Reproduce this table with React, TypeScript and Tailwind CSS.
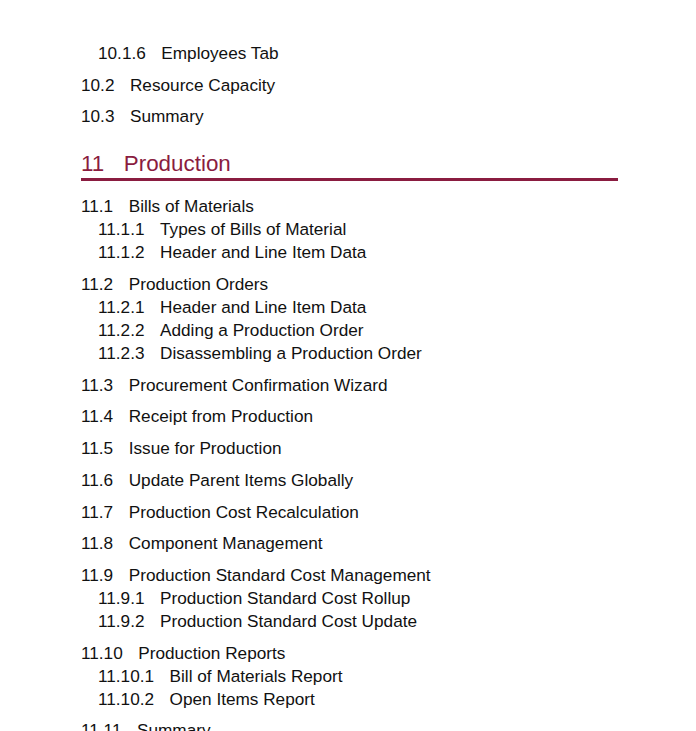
const font = { fontFamily: '"Liberation Sans", Arial, sans-serif' };

type Entry = { num: string; title: string; level: 2 | 3 };

// each inner array is a group: a section and its subsections
const before: Entry[][] = [
  [{ num: "10.1.6", title: "Employees Tab", level: 3 }],
  [{ num: "10.2", title: "Resource Capacity", level: 2 }],
  [{ num: "10.3", title: "Summary", level: 2 }],
];

const production: Entry[][] = [
  [
    { num: "11.1", title: "Bills of Materials", level: 2 },
    { num: "11.1.1", title: "Types of Bills of Material", level: 3 },
    { num: "11.1.2", title: "Header and Line Item Data", level: 3 },
  ],
  [
    { num: "11.2", title: "Production Orders", level: 2 },
    { num: "11.2.1", title: "Header and Line Item Data", level: 3 },
    { num: "11.2.2", title: "Adding a Production Order", level: 3 },
    { num: "11.2.3", title: "Disassembling a Production Order", level: 3 },
  ],
  [{ num: "11.3", title: "Procurement Confirmation Wizard", level: 2 }],
  [{ num: "11.4", title: "Receipt from Production", level: 2 }],
  [{ num: "11.5", title: "Issue for Production", level: 2 }],
  [{ num: "11.6", title: "Update Parent Items Globally", level: 2 }],
  [{ num: "11.7", title: "Production Cost Recalculation", level: 2 }],
  [{ num: "11.8", title: "Component Management", level: 2 }],
  [
    { num: "11.9", title: "Production Standard Cost Management", level: 2 },
    { num: "11.9.1", title: "Production Standard Cost Rollup", level: 3 },
    { num: "11.9.2", title: "Production Standard Cost Update", level: 3 },
  ],
  [
    { num: "11.10", title: "Production Reports", level: 2 },
    { num: "11.10.1", title: "Bill of Materials Report", level: 3 },
    { num: "11.10.2", title: "Open Items Report", level: 3 },
  ],
  [{ num: "11.11", title: "Summary", level: 2 }],
];

function Row({ entry }: { entry: Entry }) {
  return (
    <div
      className={`flex gap-[15.5px] text-[17.2px] leading-[23px] text-[#111] ${
        entry.level === 3 ? "pl-[17px]" : ""
      }`}
    >
      <span>{entry.num}</span>
      <span>{entry.title}</span>
    </div>
  );
}

function Groups({ groups }: { groups: Entry[][] }) {
  return (
    <div className="flex flex-col gap-[8.7px]">
      {groups.map((g) => (
        <div key={g[0].num}>
          {g.map((e) => (
            <Row key={e.num} entry={e} />
          ))}
        </div>
      ))}
    </div>
  );
}

export default function App() {
  return (
    <div className="h-[731px] w-[696px] overflow-hidden bg-white" style={font}>
      <div className="ml-[81px] w-[537px] pt-[42px]">
        <Groups groups={before} />

        {/* Chapter heading */}
        <h1 className="mt-[21.5px] flex gap-[19.5px] border-b-[3px] border-[#8a1c40] text-[22.4px] leading-[28px] text-[#8a1c40]">
          <span>11</span>
          <span>Production</span>
        </h1>

        <div className="mt-[14.5px]">
          <Groups groups={production} />
        </div>
      </div>
    </div>
  );
}
